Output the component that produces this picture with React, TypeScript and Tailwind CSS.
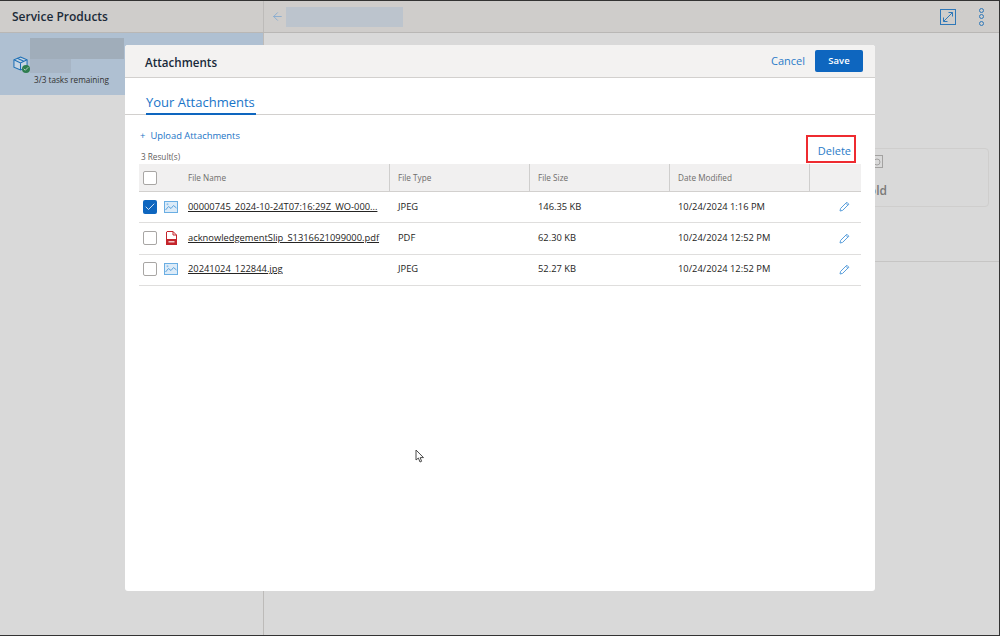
import React from 'react';
import { ArrowLeft, Check } from 'lucide-react';

const FONT = '[font-family:"Open_Sans","Noto_Sans",sans-serif]';

type Row = { name: string; type: string; size: string; date: string; checked?: boolean; pdf?: boolean };

const rows: Row[] = [
  { name: '00000745_2024-10-24T07:16:29Z_WO-000...', type: 'JPEG', size: '146.35 KB', date: '10/24/2024 1:16 PM', checked: true },
  { name: 'acknowledgementSlip_S1316621099000.pdf', type: 'PDF', size: '62.30 KB', date: '10/24/2024 12:52 PM', pdf: true },
  { name: '20241024_122844.jpg', type: 'JPEG', size: '52.27 KB', date: '10/24/2024 12:52 PM' },
];

function ImageIcon() {
  return (
    <svg width="14" height="12" viewBox="0 0 14 12" fill="none">
      <rect x="0.5" y="0.5" width="13" height="11" fill="#dcebf8" stroke="#6aaee3" />
      <path d="M1.5 9 L4.5 5.5 L7 7.5 L9.5 4.5 L12.5 7" stroke="#5aa2dc" fill="none" />
      <circle cx="3.5" cy="3.2" r="1" fill="#8cc0ea" />
    </svg>
  );
}

function PdfIcon() {
  return (
    <svg width="11" height="14" viewBox="0 0 11 14" fill="none">
      <path d="M1 .5 H7 L10.5 4 V13.5 H.5 V1 Z" fill="#fff" stroke="#c4242b" />
      <path d="M7 .5 V4 H10.5" stroke="#c4242b" fill="none" />
      <rect x="0" y="8" width="11" height="6" fill="#c4242b" />
      <rect x="2.5" y="10" width="6" height="1.5" fill="#f3c6c8" />
    </svg>
  );
}

function EditIcon() {
  return (
    <svg width="11" height="11" viewBox="0 0 11 11" fill="none" stroke="#5a9fdc" strokeWidth="1">
      <path d="M1 10 L1.6 7.4 L7.8 1.2 L9.8 3.2 L3.6 9.4 Z" />
      <path d="M6.8 2.2 L8.8 4.2" />
    </svg>
  );
}

function Checkbox({ checked }: { checked?: boolean }) {
  if (checked) {
    return (
      <div className="flex h-[14px] w-[14px] items-center justify-center rounded-[2px] bg-[#0e66bf]">
        <Check size={12} color="#fff" strokeWidth={1.6} />
      </div>
    );
  }
  return <div className="h-[14px] w-[14px] rounded-[2px] border border-[#a8a6a4] bg-white" />;
}

function PackageIcon() {
  return (
    <div className="relative h-[16px] w-[16px]">
      <svg width="15" height="15" viewBox="0 0 16 16" fill="none" stroke="#1d6fb5" strokeWidth="1.1">
        <path d="M8 1 L15 4 V12 L8 15 L1 12 V4 Z" fill="#c6d4e2" />
        <path d="M1 4 L8 7.5 L15 4 M8 7.5 V15 M4.5 2.5 L11.5 5.7" />
      </svg>
      <div className="absolute -bottom-[1px] -right-[1px] flex h-[8px] w-[8px] items-center justify-center rounded-full bg-[#2e7d4f]">
        <Check size={6} color="#fff" strokeWidth={2.5} />
      </div>
    </div>
  );
}

function HeaderCell({ label, last }: { label?: string; last?: boolean }) {
  return (
    <div className={`flex h-full items-center pl-[8px] pt-[1px] text-[8.2px] text-[#6f6d6b] ${last ? '' : 'border-r border-[#cfcecd]'}`}>
      {label}
    </div>
  );
}

export default function App() {
  return (
    <div className={`relative flex h-[636px] w-[1000px] flex-col overflow-hidden border border-l-0 border-[#333] bg-[#d9d9d9] ${FONT}`}>
      {/* page behind the dialog */}
      <div className="flex h-[32px] shrink-0 border-b border-[#b9b7b5] bg-[#cfcdcb]">
        <div className="flex w-[264px] items-center border-r border-[#bdbbb9] pl-[12px] text-[12px] font-semibold text-[#1b2a38]">
          Service Products
        </div>
        <div className="flex flex-1 items-center pl-[7px]">
          <ArrowLeft size={13} color="#7fa8d0" strokeWidth={1.5} />
          <div className="ml-[2px] h-[20px] w-[117px] bg-[#bcc4cd]" />
          <div className="ml-auto mr-[15px] flex items-center gap-[23px]">
            <div className="flex h-[16px] w-[16px] items-center justify-center border border-[#2f78b8]">
              <svg width="12" height="12" viewBox="0 0 12 12" fill="none" stroke="#2f78b8">
                <path d="M1.5 10.5 L10.5 1.5 M6.5 1.5 H10.5 V5.5 M1.5 6.5 V10.5 H5.5" />
              </svg>
            </div>
            <div className="flex flex-col gap-[1.5px]">
              <div className="h-[5px] w-[5px] rounded-full border border-[#2f78b8]" />
              <div className="h-[5px] w-[5px] rounded-full border border-[#2f78b8]" />
              <div className="h-[5px] w-[5px] rounded-full border border-[#2f78b8]" />
            </div>
          </div>
        </div>
      </div>
      <div className="flex flex-1">
        <div className="w-[264px] border-r border-[#bdbbb9]">
          <div className="flex h-[62px] bg-[#afc0d2] pl-[13px]">
            <div className="mt-[23px]">
              <PackageIcon />
            </div>
            <div className="ml-[1px] pt-[5px]">
              <div className="h-[21px] w-[94px] bg-[#a0adba]" />
              <div className="h-[14px] w-[41px] bg-[#a7b5c5]" />
              <div className="mt-[1px] pl-[4px] text-[8.2px] leading-[12px] whitespace-nowrap text-[#323130]">3/3 tasks remaining</div>
            </div>
          </div>
        </div>
        <div className="flex flex-1 flex-col items-end pr-[10px]">
          <div className="mt-[115px] flex h-[59px] w-[300px] justify-end rounded border border-[#cfcecd] pr-[101px]">
            <div className="flex flex-col items-end pt-[5px]">
              <svg width="12" height="14" viewBox="0 0 12 14" fill="none" stroke="#a3a2a1" className="mr-[4px]">
                <rect x="0.5" y="1.5" width="11" height="12" />
                <circle cx="6" cy="8" r="3" />
              </svg>
              <span className="mt-[14px] text-[12px] font-semibold text-[#7a7978]">Hold</span>
            </div>
          </div>
          <div className="-mr-[10px] mt-[54px] h-px w-[400px] bg-[#c6c5c4]" />
        </div>
      </div>

      {/* dialog */}
      <div className="absolute left-[125px] top-[44px] flex h-[546px] w-[750px] flex-col rounded-[3px] bg-white">
        <div className="flex h-[33px] shrink-0 items-center rounded-t-[3px] border-b border-[#d2d0ce] bg-[#f3f2f1] pl-[20px] pr-[12px]">
          <span className="pt-[3px] text-[11.6px] font-semibold text-[#17293a]">Attachments</span>
          <span className="ml-auto text-[11px] text-[#2a7bc8]">Cancel</span>
          <button className="ml-[10px] h-[22px] w-[48px] rounded-[2px] bg-[#0e66bf] text-[9.5px] font-semibold text-white">Save</button>
        </div>
        <div className="h-[37px] shrink-0 border-b border-[#d2d0ce] pl-[21px] pt-[15px]">
          <div className="w-[110px] border-b-[2px] border-[#0e66bf] pb-[1px] text-[13px] leading-[19px] whitespace-nowrap text-[#1874c8]">
            Your Attachments
          </div>
        </div>
        <div className="relative flex-1 px-[14px]">
          <div className="mt-[14px] flex h-[15px] items-center pl-[1px] text-[9.4px] text-[#1c74c6]">
            <span className="mr-[5px]">+</span>Upload Attachments
          </div>
          <div className="mt-[6px] h-[14px] pl-[2px] text-[8.2px] leading-[14px] text-[#5f5e5d]">3 Result(s)</div>
          <div className="grid h-[28px] grid-cols-[251px_140px_140px_140px_50px] items-center border-b border-[#d2d0ce] bg-[#f1f0f0]">
            <div className="flex h-full items-center border-r border-[#cfcecd]">
              <div className="ml-[4px]">
                <Checkbox />
              </div>
              <span className="ml-[31px] pt-[1px] text-[8.2px] text-[#6f6d6b]">File Name</span>
            </div>
            <HeaderCell label="File Type" />
            <HeaderCell label="File Size" />
            <HeaderCell label="Date Modified" />
            <HeaderCell last />
          </div>
          {rows.map((r) => (
            <div
              key={r.name}
              className="grid h-[31.4px] grid-cols-[251px_140px_140px_140px_50px] items-center border-b border-[#dfdedd] pb-[1px] text-[9.35px] text-[#252423]"
            >
              <div className="flex items-center">
                <div className="ml-[4px]">
                  <Checkbox checked={r.checked} />
                </div>
                <div className="ml-[7px] flex w-[14px] justify-center">{r.pdf ? <PdfIcon /> : <ImageIcon />}</div>
                <span className="ml-[10px] whitespace-nowrap underline">{r.name}</span>
              </div>
              <div className="pl-[8px]">{r.type}</div>
              <div className="pl-[8px]">{r.size}</div>
              <div className="pl-[8px]">{r.date}</div>
              <div className="flex justify-end pr-[10px]">
                <EditIcon />
              </div>
            </div>
          ))}
          {/* annotation over the table */}
          <div className="absolute left-[681px] top-[20px] flex h-[28px] w-[50px] items-end justify-end border-[2px] border-[#ee2b30] pb-[3px] pr-[3px] text-[11px] leading-[14px] text-[#2a7bc8]">
            Delete
          </div>
        </div>
      </div>

      {/* mouse pointer */}
      <svg className="absolute left-[415px] top-[448px]" width="10" height="15" viewBox="0 0 10 15" fill="#fff" stroke="#4a4a4a">
        <path d="M1 1 V11 L3.4 9 L5 13 L6.6 12.3 L5.2 8.6 H8.5 Z" />
      </svg>
    </div>
  );
}
